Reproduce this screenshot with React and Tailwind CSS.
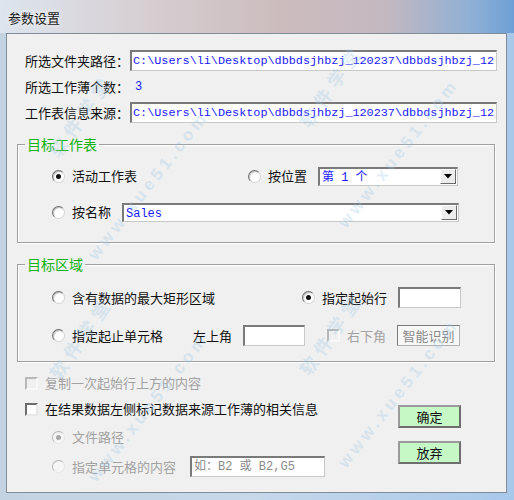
import React from "react";

const CJK = "font-['Noto_Sans_CJK_SC',sans-serif]";
const MONO = "font-['Liberation_Mono','Noto_Sans_CJK_SC',monospace]";

function Radio({ checked, disabled }) {
  return (
    <span
      className={
        disabled
          ? "flex h-[13px] w-[13px] shrink-0 items-center justify-center rounded-full border border-t-[#b4b4b4] border-l-[#b4b4b4] border-r-[#e6e6e6] border-b-[#e6e6e6] bg-[#f6f6f6]"
          : "flex h-[13px] w-[13px] shrink-0 items-center justify-center rounded-full border border-t-[#6e6e6e] border-l-[#6e6e6e] border-r-[#d4d4d4] border-b-[#d4d4d4] bg-white shadow-[inset_1px_1px_1px_#bdbdbd]"
      }
    >
      {checked && (
        <span
          className={
            disabled
              ? "h-[5px] w-[5px] rounded-full bg-[#a8a8a8]"
              : "h-[5px] w-[5px] rounded-full bg-[#111111]"
          }
        />
      )}
    </span>
  );
}

function Check({ disabled }) {
  return (
    <span
      className={
        disabled
          ? "block h-[13px] w-[13px] shrink-0 border-2 border-t-[#b8b8b8] border-l-[#b8b8b8] border-r-[#f8f8f8] border-b-[#f8f8f8] bg-[#f0f0f0]"
          : "block h-[13px] w-[13px] shrink-0 border-2 border-t-[#6a6a6a] border-l-[#6a6a6a] border-r-[#e8e8e8] border-b-[#e8e8e8] bg-white"
      }
    />
  );
}

function Sunken({ className, children }) {
  return (
    <div
      className={
        "flex shrink-0 items-center overflow-hidden border-t-2 border-l-2 border-r border-b border-t-[#7a7a7a] border-l-[#7a7a7a] border-r-[#c8c8c8] border-b-[#c8c8c8] bg-white " +
        className
      }
    >
      {children}
    </div>
  );
}

function Combo({ className, children }) {
  return (
    <Sunken className={className}>
      <div className={`flex-1 pl-[2px] pt-[3px] text-[12px] leading-[15px] text-[#1a1aff] whitespace-pre ${MONO}`}>
        {children}
      </div>
      <div className="mr-[1px] flex h-[15px] w-[16px] items-center justify-center border border-t-[#ffffff] border-l-[#ffffff] border-r-[#6a6a6a] border-b-[#6a6a6a] bg-[#ececec]">
        <svg width="8" height="5" viewBox="0 0 8 5">
          <path d="M0 0 H8 L4 4.5 Z" fill="#000" />
        </svg>
      </div>
    </Sunken>
  );
}

function Group({ title, children }) {
  return (
    <fieldset className="ml-0 w-[478px] border border-[#a0a0a0] shadow-[inset_1px_1px_0_#ffffff,1px_1px_0_#ffffff]">
      <legend className={`ml-[7px] px-[2px] text-[14px] leading-[16px] text-[#12b312] ${CJK}`}>
        {title}
      </legend>
      {children}
    </fieldset>
  );
}

function Label({ children, gray, className = "" }) {
  return (
    <span
      className={`shrink-0 text-[13px] leading-[20px] whitespace-nowrap ${CJK} ${
        gray ? "text-[#a2a2a2]" : "text-[#111111]"
      } ${className}`}
    >
      {children}
    </span>
  );
}

function Button({ children }) {
  return (
    <div
      className={`flex h-[23px] w-[63px] items-center justify-center border-2 border-t-[#9a9a9a] border-l-[#9a9a9a] border-r-[#6e6e6e] border-b-[#6e6e6e] bg-[#c6f8c6] text-[13px] text-[#111] ${CJK}`}
    >
      {children}
    </div>
  );
}

function Watermark({ text, x, y, angle, size = 17, spacing = 4 }) {
  return (
    <span
      className={`pointer-events-none absolute origin-top-left whitespace-nowrap font-bold text-[#9cc8e8] opacity-30 font-['Liberation_Sans','Noto_Sans_CJK_SC',sans-serif]`}
      style={{
        left: x,
        top: y,
        transform: `rotate(${angle}deg)`,
        fontSize: size,
        letterSpacing: spacing,
      }}
    >
      {text}
    </span>
  );
}

const PATH = "C:\\Users\\li\\Desktop\\dbbdsjhbzj_120237\\dbbdsjhbzj_12";

export default function App() {
  return (
    <div className="relative h-[500px] w-[514px] overflow-hidden bg-[linear-gradient(90deg,#c3d3e2_0%,#c6d8ea_50%,#a8c8ea_100%)]">
      {/* title bar */}
      <div className="flex h-[33px] items-center bg-[linear-gradient(90deg,#dde5ee_0%,#d6cdd0_30%,#ccbcbe_55%,#c4b8c0_75%,#8eb0d6_92%,#6d9fd6_100%)] pl-[8px] pt-[3px]">
        <span className={`text-[13px] text-[#1a1a1a] [text-shadow:0_0_6px_#ffffff] ${CJK}`}>参数设置</span>
      </div>

      {/* client area */}
      <div className="ml-[6px] h-[460px] w-[501px] border border-[#7f8c99] bg-[#f0f0f0] pl-[10px] pt-[16px]">
        {/* row 1 */}
        <div className="ml-[8px] flex h-[21px] items-center">
          <Label className="w-[105px]">所选文件夹路径：</Label>
          <Sunken className="h-[21px] w-[367px]">
            <span className={`pl-[1px] pt-[1px] text-[11.8px] whitespace-nowrap text-[#1a1aff] ${MONO}`}>
              {PATH}
            </span>
          </Sunken>
        </div>
        {/* row 2 */}
        <div className="ml-[8px] flex h-[31px] items-center">
          <Label className="w-[105px]">所选工作薄个数：</Label>
          <span className={`pl-[5px] text-[12px] text-[#1a1aff] ${MONO}`}>3</span>
        </div>
        {/* row 3 */}
        <div className="ml-[8px] flex h-[21px] items-center">
          <Label className="w-[105px]">工作表信息来源：</Label>
          <Sunken className="h-[21px] w-[367px]">
            <span className={`pl-[1px] pt-[1px] text-[11.8px] whitespace-nowrap text-[#1a1aff] ${MONO}`}>
              {PATH}
            </span>
          </Sunken>
        </div>

        {/* group 1 */}
        <div className="mt-[13px]">
          <Group title="目标工作表">
            <div className="pl-[34px] pt-[14px] pb-[20px]">
              <div className="flex h-[20px] items-center">
                <div className="flex w-[196px] items-center">
                  <Radio checked />
                  <Label className="ml-[7px]">活动工作表</Label>
                </div>
                <Radio />
                <Label className="ml-[7px]">按位置</Label>
                <Combo className="ml-[11px] h-[19px] w-[140px]">第 1 个</Combo>
              </div>
              <div className="mt-[16px] flex h-[20px] items-center">
                <Radio />
                <Label className="ml-[7px]">按名称</Label>
                <Combo className="ml-[11px] h-[19px] w-[337px]">Sales</Combo>
              </div>
            </div>
          </Group>
        </div>

        {/* group 2 */}
        <div className="mt-[13px]">
          <Group title="目标区域">
            <div className="pl-[34px] pt-[15px] pb-[15px]">
              <div className="flex h-[21px] items-center">
                <div className="flex w-[250px] items-center">
                  <Radio />
                  <Label className="ml-[7px]">含有数据的最大矩形区域</Label>
                </div>
                <Radio checked />
                <Label className="ml-[7px]">指定起始行</Label>
                <Sunken className="ml-[11px] h-[21px] w-[63px]" />
              </div>
              <div className="mt-[17px] flex h-[21px] items-center">
                <div className="flex w-[141px] items-center">
                  <Radio />
                  <Label className="ml-[7px]">指定起止单元格</Label>
                </div>
                <Label>左上角</Label>
                <Sunken className="ml-[11px] h-[21px] w-[62px]" />
                <span className="ml-[22px]">
                  <Check disabled />
                </span>
                <Label gray className="ml-[7px]">右下角</Label>
                <div
                  className={`ml-[11px] flex h-[21px] w-[63px] items-center justify-center border border-t-[#7a7a7a] border-l-[#7a7a7a] border-r-[#b0b0b0] border-b-[#b0b0b0] bg-[#f8f8f8] text-[13px] text-[#8a8a8a] ${CJK}`}
                >
                  智能识别
                </div>
              </div>
            </div>
          </Group>
        </div>

        {/* bottom area */}
        <div className="ml-[8px] mt-[11px] flex h-[20px] items-center">
          <Check disabled />
          <Label gray className="ml-[7px]">复制一次起始行上方的内容</Label>
        </div>
        <div className="mt-[6px] flex">
          <div className="w-[381px]">
            <div className="ml-[8px] flex h-[20px] items-center">
              <Check />
              <Label className="ml-[7px]">在结果数据左侧标记数据来源工作薄的相关信息</Label>
            </div>
            <div className="ml-[35px] mt-[8px] flex h-[20px] items-center">
              <Radio checked disabled />
              <Label gray className="ml-[7px]">文件路径</Label>
            </div>
            <div className="ml-[35px] mt-[9px] flex h-[21px] items-center">
              <Radio disabled />
              <Label gray className="ml-[7px]">指定单元格的内容</Label>
              <Sunken className="ml-[14px] h-[21px] w-[135px]">
                <span className={`pl-[2px] text-[12px] whitespace-pre text-[#8a8a8a] ${MONO}`}>如：B2 或 B2,G5</span>
              </Sunken>
            </div>
          </div>
          <div className="pt-[6px]">
            <Button>确定</Button>
            <div className="mt-[13px]">
              <Button>放弃</Button>
            </div>
          </div>
        </div>
      </div>

      {/* watermark overlay */}
      <Watermark text="www.xue51.com" x={82} y={250} angle={-52} />
      <Watermark text="www.xue51.com" x={332} y={218} angle={-52} />
      <Watermark text="www.xue51.com" x={82} y={472} angle={-52} />
      <Watermark text="www.xue51.com" x={332} y={458} angle={-52} />
      <Watermark text="软件学堂" x={44} y={148} angle={-55} size={18} spacing={6} />
      <Watermark text="软件学堂" x={294} y={118} angle={-55} size={18} spacing={6} />
      <Watermark text="软件学堂" x={44} y={370} angle={-55} size={18} spacing={6} />
      <Watermark text="软件学堂" x={294} y={366} angle={-55} size={18} spacing={6} />
    </div>
  );
}
